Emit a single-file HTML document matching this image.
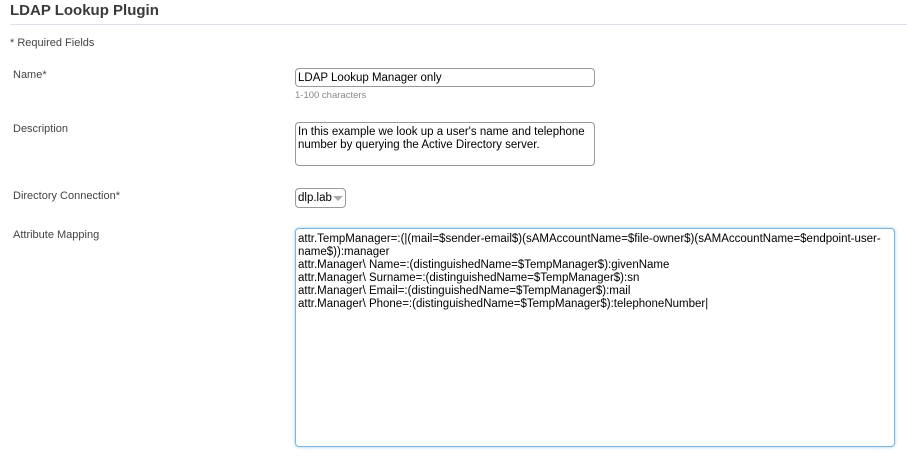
<!DOCTYPE html><html><head><style>
body{margin:0;width:907px;height:458px;background:#fff;font-family:"Liberation Sans",Arial,sans-serif;color:#333;position:relative;overflow:hidden}
.a{position:absolute;white-space:nowrap}
.l{font-size:11px;color:#444}
.box{position:absolute;border:1px solid #999;border-radius:4px;background:#fff;box-sizing:border-box}
</style></head><body>
<div class="a" style="left:10px;top:2px;font:bold 15px 'Liberation Sans',Arial,sans-serif;color:#3a3a3a">LDAP Lookup Plugin</div>
<div class="a" style="left:10px;top:24px;width:897px;height:1px;background:#dde3e8"></div>
<div class="a l" style="left:10px;top:37px">* Required Fields</div>
<div class="a l" style="left:13px;top:69px">Name*</div>
<div class="box" style="left:295px;top:68px;width:300px;height:19px"></div>
<div class="a" style="left:298px;top:72px;font-size:11.5px;color:#000">LDAP Lookup Manager only</div>
<div class="a" style="left:295px;top:90px;font-size:9.5px;color:#888">1-100 characters</div>
<div class="a l" style="left:13px;top:123px">Description</div>
<div class="box" style="left:295px;top:122px;width:300px;height:44px"></div>
<div class="a" style="left:298px;top:126px;font-size:11.5px;color:#000;line-height:13px">In this example we look up a user's name and telephone<br>number by querying the Active Directory server.</div>
<div class="a l" style="left:13px;top:190px">Directory Connection*</div>
<div class="box" style="left:295px;top:188px;width:51px;height:20px"></div>
<div class="a" style="left:298px;top:192px;font-size:11.5px;color:#000">dlp.lab</div>
<div class="a" style="left:333px;top:196px;width:0;height:0;border-left:5px solid transparent;border-right:5px solid transparent;border-top:5px solid #aaa"></div>
<div class="a l" style="left:13px;top:229px">Attribute Mapping</div>
<div class="box" style="left:295px;top:228px;width:600px;height:219px;border-color:#7fb5e0;box-shadow:0 0 3px #9cc9f0"></div>
<div class="a" style="left:298px;top:233px;font-size:11.5px;color:#000;line-height:13px">attr.TempManager=:(|(mail=$sender-email$)(sAMAccountName=$file-owner$)(sAMAccountName=$endpoint-user-<br>name$)):manager<br>attr.Manager\ Name=:(distinguishedName=$TempManager$):givenName<br>attr.Manager\ Surname=:(distinguishedName=$TempManager$):sn<br>attr.Manager\ Email=:(distinguishedName=$TempManager$):mail<br>attr.Manager\ Phone=:(distinguishedName=$TempManager$):telephoneNumber|</div>
</body></html>
